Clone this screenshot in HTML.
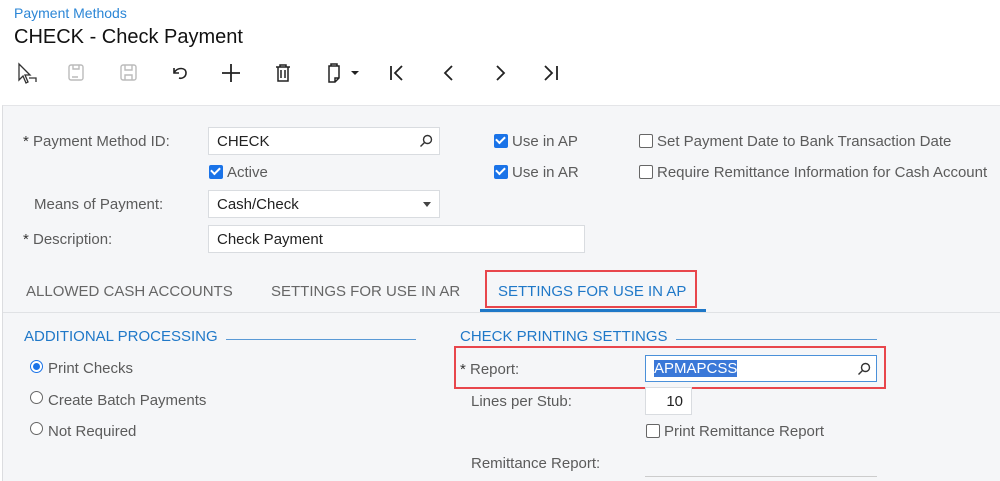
<!DOCTYPE html>
<html><head><style>
*{margin:0;padding:0;box-sizing:border-box}
body{width:1000px;height:481px;overflow:hidden;background:#fff;font-family:"Liberation Sans",sans-serif;position:relative}
.a{position:absolute;white-space:nowrap}
.lbl{font-size:15px;color:#5b5b5b;margin-top:1px}
.inp{position:absolute;background:#fff;border:1px solid #d9dce0;font-size:15px;color:#222;padding:0 8px;line-height:27px;height:28px}
.cb{position:absolute;width:14px;height:14px;border-radius:2px}
.on{background:#1a73e8}
.off{border:1.5px solid #666;background:#fff}
.ck{position:absolute;left:2px;top:2px;width:9px;height:6px;border-left:2px solid #fff;border-bottom:2px solid #fff;transform:rotate(-45deg);transform-origin:center}
.rad{position:absolute;width:13px;height:13px;border-radius:50%;border:1.5px solid #666;background:#fff}
.blue{color:#1f78c8}
.ico{position:absolute;top:62px}
</style></head><body>
<div class="a" style="left:14px;top:5px;font-size:14px;color:#2b86d6">Payment Methods</div>
<div class="a" style="left:14px;top:26px;font-size:20px;color:#111">CHECK - Check Payment</div>
<svg class="ico" style="left:16px" width="24" height="24" viewBox="0 0 24 24" fill="none" stroke="#333" stroke-width="1.3"><path d="M3 2 L3 18 L7 14 L10 21 L12 20 L9 13 L14 13 Z"/><path d="M13 16 L20 16 L20 20"/></svg>
<svg class="ico" style="left:66px" width="22" height="22" viewBox="0 0 22 22" fill="none" stroke="#bbb" stroke-width="1.4"><rect x="3" y="3" width="14" height="15" rx="2"/><path d="M7 3v4h6V3M6 15h6"/></svg>
<svg class="ico" style="left:118px" width="22" height="22" viewBox="0 0 22 22" fill="none" stroke="#bbb" stroke-width="1.4"><rect x="3" y="3" width="15" height="15" rx="2"/><path d="M7 3v5h7V3M7 18v-5h7v5"/></svg>
<svg class="ico" style="left:169px" width="22" height="22" viewBox="0 0 22 22" fill="none" stroke="#222" stroke-width="1.6"><path d="M5 6v5h5"/><path d="M5 11 C8 5 17 5 17 11 C17 15 13 17 10 16"/></svg>
<svg class="ico" style="left:220px" width="22" height="22" viewBox="0 0 22 22" stroke="#222" stroke-width="1.8"><path d="M11 2v18M2 11h18"/></svg>
<svg class="ico" style="left:272px" width="22" height="22" viewBox="0 0 22 22" fill="none" stroke="#222" stroke-width="1.5"><path d="M4 5h14M8 5V3h6v2M6 5v14h10V5M9 8v8M13 8v8"/></svg>
<svg class="ico" style="left:323px" width="22" height="22" viewBox="0 0 22 22" fill="none" stroke="#222" stroke-width="1.5"><path d="M6 4h10v12l-4 4H6zM8 4V2h6v2M12 20v-4h4"/></svg>
<svg class="ico" style="left:349px" width="12" height="22" viewBox="0 0 12 22"><path d="M2 9h8l-4 4z" fill="#222"/></svg>
<svg class="ico" style="left:386px" width="22" height="22" viewBox="0 0 22 22" fill="none" stroke="#222" stroke-width="1.8"><path d="M5 4v14M16 4l-7 7 7 7"/></svg>
<svg class="ico" style="left:438px" width="22" height="22" viewBox="0 0 22 22" fill="none" stroke="#222" stroke-width="1.8"><path d="M14 4l-7 7 7 7"/></svg>
<svg class="ico" style="left:489px" width="22" height="22" viewBox="0 0 22 22" fill="none" stroke="#222" stroke-width="1.8"><path d="M8 4l7 7-7 7"/></svg>
<svg class="ico" style="left:540px" width="22" height="22" viewBox="0 0 22 22" fill="none" stroke="#222" stroke-width="1.8"><path d="M5 4l7 7-7 7M17 4v14"/></svg>
<div class="a" style="left:2px;top:105px;width:998px;height:376px;background:#f5f6f8;border-left:1px solid #dcdde0;border-top:1px solid #e4e5e8"></div>
<div class="a lbl" style="left:23px;top:132px"><span style="color:#333">*</span> Payment Method ID:</div>
<div class="inp" style="left:208px;top:127px;width:232px">CHECK<svg style="position:absolute;right:6px;top:6px" width="14" height="14" viewBox="0 0 14 14" fill="none" stroke="#333" stroke-width="1.4"><circle cx="8.5" cy="5.5" r="4"/><path d="M5.5 8.5L1.5 12.5"/></svg></div>
<div class="cb on" style="left:209px;top:165px"><div class="ck"></div></div>
<div class="a lbl" style="left:227px;top:163px">Active</div>
<div class="a lbl" style="left:34px;top:195px">Means of Payment:</div>
<div class="inp" style="left:208px;top:190px;width:232px">Cash/Check<svg style="position:absolute;right:8px;top:11px" width="8" height="5"><path d="M0 0h8L4 5z" fill="#444"/></svg></div>
<div class="a lbl" style="left:23px;top:230px"><span style="color:#333">*</span> Description:</div>
<div class="inp" style="left:208px;top:225px;width:377px">Check Payment</div>
<div class="cb on" style="left:494px;top:134px"><div class="ck"></div></div>
<div class="a lbl" style="left:512px;top:132px">Use in AP</div>
<div class="cb on" style="left:494px;top:165px"><div class="ck"></div></div>
<div class="a lbl" style="left:512px;top:163px">Use in AR</div>
<div class="cb off" style="left:639px;top:134px"></div>
<div class="a lbl" style="left:657px;top:132px">Set Payment Date to Bank Transaction Date</div>
<div class="cb off" style="left:639px;top:165px"></div>
<div class="a lbl" style="left:657px;top:163px">Require Remittance Information for Cash Account</div>
<div class="a lbl" style="left:26px;top:282px;color:#666">ALLOWED CASH ACCOUNTS</div>
<div class="a lbl" style="left:271px;top:282px;color:#666">SETTINGS FOR USE IN AR</div>
<div class="a lbl blue" style="left:498px;top:282px">SETTINGS FOR USE IN AP</div>
<div class="a" style="left:485px;top:270px;width:212px;height:38px;border:2px solid #e8464c"></div>
<div class="a" style="left:480px;top:309px;width:226px;height:3px;background:#1f78c8"></div>
<div class="a" style="left:3px;top:312px;width:997px;height:1px;background:#e0e2e5"></div>
<div class="a lbl blue" style="left:24px;top:327px">ADDITIONAL PROCESSING</div>
<div class="a" style="left:226px;top:339px;width:190px;height:1px;background:#5a9ad6"></div>
<div class="rad" style="left:30px;top:360px;border-color:#1a73e8"><div style="position:absolute;left:1.5px;top:1.5px;width:7px;height:7px;border-radius:50%;background:#1a73e8"></div></div>
<div class="a lbl" style="left:48px;top:359px">Print Checks</div>
<div class="rad" style="left:30px;top:391px"></div>
<div class="a lbl" style="left:48px;top:391px">Create Batch Payments</div>
<div class="rad" style="left:30px;top:422px"></div>
<div class="a lbl" style="left:48px;top:422px">Not Required</div>
<div class="a lbl blue" style="left:460px;top:327px">CHECK PRINTING SETTINGS</div>
<div class="a" style="left:676px;top:339px;width:201px;height:1px;background:#5a9ad6"></div>
<div class="a" style="left:454px;top:346px;width:432px;height:43px;border:2px solid #e8464c"></div>
<div class="a lbl" style="left:460px;top:360px"><span style="color:#333">*</span> Report:</div>
<div class="inp" style="left:645px;top:355px;width:232px;height:27px;border-color:#4a90d9;line-height:26px"><span style="background:#3a78d8;color:#fff">APMAPCSS</span><svg style="position:absolute;right:5px;top:6px" width="14" height="14" viewBox="0 0 14 14" fill="none" stroke="#333" stroke-width="1.4"><circle cx="8.5" cy="5.5" r="4"/><path d="M5.5 8.5L1.5 12.5"/></svg></div>
<div class="a lbl" style="left:471px;top:392px">Lines per Stub:</div>
<div class="inp" style="left:645px;top:387px;width:47px;text-align:right">10</div>
<div class="cb off" style="left:646px;top:424px"></div>
<div class="a lbl" style="left:664px;top:422px">Print Remittance Report</div>
<div class="a lbl" style="left:471px;top:454px">Remittance Report:</div>
<div class="a" style="left:645px;top:476px;width:232px;height:1px;background:#ccc"></div>
</body></html>
